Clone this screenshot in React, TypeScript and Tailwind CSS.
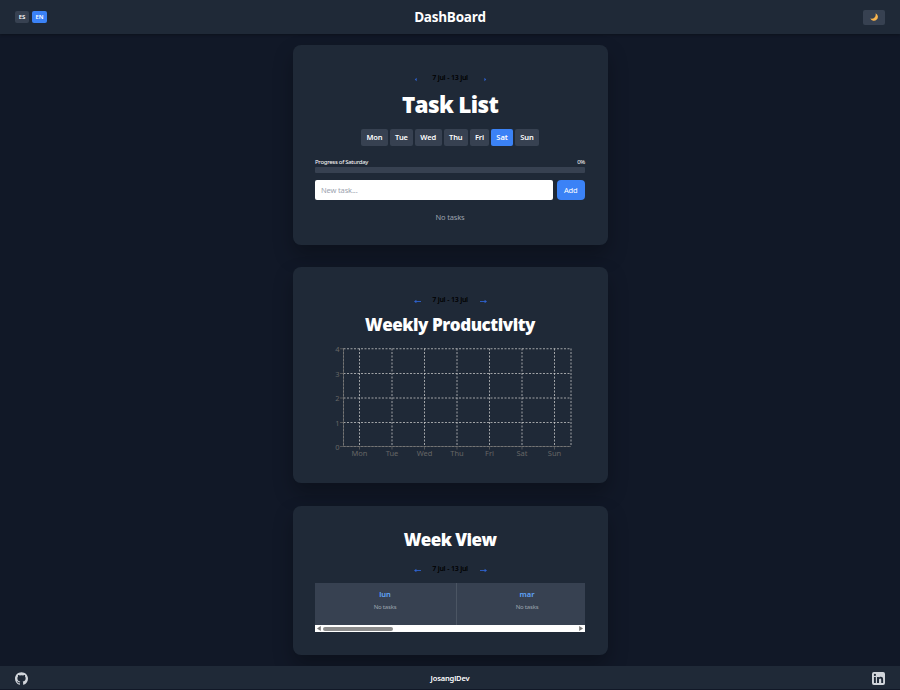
import React from "react";

const days = [
  { name: "Mon", width: "w-[27px]" },
  { name: "Tue", width: "w-[23px]" },
  { name: "Wed", width: "w-[26.5px]" },
  { name: "Thu", width: "w-[24.5px]" },
  { name: "Fri", width: "w-[19px]" },
  { name: "Sat", width: "w-[22px]" },
  { name: "Sun", width: "w-[24px]" },
];

function Arrow({ left = false, tip = false }: { left?: boolean; tip?: boolean }) {
  return (
    <svg className={left ? "h-[5px] w-[7px]" : "h-[5px] w-[7px] rotate-180"} viewBox="0 0 7 5">
      {!tip && <path d="M1 2.5H7" stroke="#2c5bbd" strokeWidth="1" />}
      <path d={tip ? "M0.8 2.5L2.6 0.8V4.2Z" : "M0 2.5L2.4 0.8V4.2Z"} fill="#2f62cf" />
    </svg>
  );
}

function WeekNav({ tip = false }: { tip?: boolean }) {
  return (
    <div className="flex h-3 items-center justify-center text-[7px] font-semibold text-black">
      <span className="pt-[2px]"><Arrow left tip={tip} /></span>
      <span className="w-[59px] whitespace-nowrap pt-px text-center tracking-[-0.28px] [word-spacing:0.3px]">7 jul - 13 jul</span>
      <span className="pt-[2px]"><Arrow tip={tip} /></span>
    </div>
  );
}

function Card({ className, children }: { className: string; children: React.ReactNode }) {
  return (
    <section className={"w-[315px] shrink-0 rounded-[8px] bg-[#1f2937] px-[22.5px] shadow-[0_10px_20px_rgba(0,0,0,0.28)] " + className}>
      {children}
    </section>
  );
}

function Chart() {
  const xs = [359.5, 392, 424.5, 457, 489.5, 522, 554.5];
  const ys = [348.75, 373.5, 398, 422.5, 446.5];
  return (
    <svg className="block h-[120px] w-[270px]" viewBox="315 343 270 120">
      <g stroke="#cccccc" strokeWidth="0.75" strokeDasharray="2 1.5" fill="none">
        {ys.map((y) => <path key={y} d={`M343.5 ${y}H571`} />)}
        {[343.5, ...xs, 571].map((x) => <path key={x} d={`M${x} 348.5V446.5`} />)}
      </g>
      <g stroke="#666666" strokeWidth="0.75">
        <path d="M343.5 348.5V446.5H571" fill="none" />
        {ys.map((y) => <path key={y} d={`M340 ${y}H343.5`} />)}
        {xs.map((x) => <path key={x} d={`M${x} 446.5V449.5`} />)}
      </g>
      <g fill="#666666" fontSize="7.5">
        {ys.map((y, i) => <text key={y} x="339.5" y={y + 3} textAnchor="end">{4 - i}</text>)}
        {xs.map((x, i) => <text key={x} x={x} y="455.5" textAnchor="middle">{days[i].name}</text>)}
      </g>
    </svg>
  );
}

export default function App() {
  return (
    <div className="flex h-[690px] w-[900px] flex-col overflow-hidden bg-[#111827] font-['Noto_Sans','Open_Sans',sans-serif] text-white">
      <header className="z-10 flex h-[34px] shrink-0 items-center justify-between bg-[#1f2937] px-[15px] shadow-[0_1px_3px_rgba(0,0,0,0.3)]">
        <div className="flex w-20 gap-[3px] text-[6px] font-semibold leading-none">
          <button className="h-[12px] w-[14px] rounded-[2px] bg-[#374151]">ES</button>
          <button className="h-[12px] w-[15px] rounded-[2px] bg-[#3b82f6]">EN</button>
        </div>
        <h1 className="pt-[2px] font-['Open_Sans',sans-serif] text-[13.5px] font-bold leading-none tracking-[-0.25px]">DashBoard</h1>
        <div className="flex w-20 justify-end">
          <button className="flex h-[15px] w-[22px] items-center justify-center rounded-[2px] bg-[#374151]">
            <svg className="h-2 w-2" viewBox="0 0 8 8"><path d="M5.6.2A4 4 0 1 1 .3 5.6C4 6.4 6.3 4 5.6.2Z" fill="#f9b44c" /></svg>
          </button>
        </div>
      </header>

      <main className="flex h-[631.5px] shrink-0 flex-col items-center pt-[11px]">
        <Card className="h-[200px] pt-[27px]">
          <WeekNav tip />
          <h2 className="mt-[7px] flex h-[27px] items-center justify-center whitespace-nowrap font-['Open_Sans',sans-serif] text-[22.5px] font-extrabold tracking-[-0.65px]">Task List</h2>
          <div className="mt-[11px] flex justify-center gap-[2px] text-[7.5px] font-semibold tracking-[-0.1px]">
            {days.map((d) => (
              <button key={d.name} className={"h-[17px] rounded-[2px] pt-px " + d.width + (d.name === "Sat" ? " bg-[#3b82f6]" : " bg-[#374151]")}>{d.name}</button>
            ))}
          </div>
          <div className="mt-[11px] flex h-[10px] items-center justify-between text-[6px] tracking-[-0.28px]">
            <span>Progress of Saturday</span><span>0%</span>
          </div>
          <div className="h-[5.5px] rounded-[1px] bg-[#374151]" />
          <div className="mt-[7.5px] flex h-5 gap-[3.5px] text-[7.5px] tracking-[-0.15px]">
            <input className="w-[238px] rounded-[2px] bg-white px-[6px] pt-px text-black placeholder:text-[#9ca3af]" placeholder="New task..." />
            <button className="flex-1 rounded-[4px] bg-[#3b82f6] pt-px">Add</button>
          </div>
          <p className="mt-[11px] text-center text-[7.5px] leading-[12px] tracking-[-0.15px] text-[#9ca3af]">No tasks</p>
        </Card>

        <Card className="mt-[22px] h-[216px] pt-[27px]">
          <WeekNav />
          <h2 className="mt-[6px] flex h-[25px] items-center justify-center whitespace-nowrap font-['Open_Sans',sans-serif] text-[17px] font-extrabold tracking-[-0.45px]">Weekly Productivity</h2>
          <div className="mt-[6px]"><Chart /></div>
        </Card>

        <Card className="mt-[23px] h-[148.5px] pt-[21px]">
          <h2 className="flex h-[25px] items-center justify-center whitespace-nowrap font-['Open_Sans',sans-serif] text-[17px] font-extrabold tracking-[-0.55px]">Week View</h2>
          <div className="mt-[11px]"><WeekNav /></div>
          <div className="mt-[8px] grid h-[42px] grid-cols-[142px_1fr] text-center">
            {["lun", "mar"].map((d) => (
              <div key={d} className={d === "lun" ? "border-r border-[#4b5563] bg-[#374151] pt-[6px]" : "w-[128px] overflow-hidden bg-[#374151] pt-[6px]"}>
                <div className="w-[140px]">
                  <h3 className="text-[7.5px] font-semibold leading-[11px] text-[#60a5fa]">{d}</h3>
                  <p className="mt-[2px] text-[6px] leading-[11px] tracking-[-0.2px] text-[#9ca3af]">No tasks</p>
                </div>
              </div>
            ))}
          </div>
          <div className="flex h-[7px] items-center justify-between bg-white px-[2px]">
            <svg className="h-[5px] w-1" viewBox="0 0 4 5"><path d="M0 2.5L3.8 0V5Z" fill="#777777" /></svg>
            <div className="ml-[2px] h-1 w-[70px] rounded-full bg-[#8b8b8b]" />
            <svg className="ml-auto h-[5px] w-1" viewBox="0 0 4 5"><path d="M4 2.5L.2 0V5Z" fill="#777777" /></svg>
          </div>
        </Card>
      </main>

      <footer className="z-10 flex h-[24.5px] shrink-0 items-center justify-between border-b border-[#111827] bg-[#1f2937] px-[15px]">
        <svg className="mt-[2px] h-[13px] w-[13px]" viewBox="0 0 24 24" fill="#d1d5db"><path d="M12 .5C5.37.5 0 5.78 0 12.292c0 5.211 3.438 9.63 8.205 11.188.6.111.82-.254.82-.567v-2.18c-3.338.711-4.042-1.41-4.042-1.41-.546-1.359-1.333-1.721-1.333-1.721-1.09-.73.083-.716.083-.716 1.205.083 1.84 1.215 1.84 1.215 1.071 1.802 2.81 1.281 3.495.98.108-.764.42-1.282.763-1.577-2.665-.297-5.467-1.309-5.467-5.827 0-1.287.467-2.339 1.235-3.164-.124-.297-.535-1.496.117-3.12 0 0 1.008-.317 3.3 1.209a11.7 11.7 0 0 1 6.006 0c2.29-1.526 3.297-1.209 3.297-1.209.653 1.624.242 2.823.12 3.12.77.825 1.233 1.877 1.233 3.164 0 4.53-2.807 5.527-5.48 5.817.43.366.814 1.087.814 2.19v3.248c0 .315.216.683.825.566C20.565 21.917 24 17.501 24 12.292 24 5.78 18.627.5 12 .5Z" /></svg>
        <span className="pt-[2px] text-[7.5px] font-semibold tracking-[-0.15px]">JosanglDev</span>
        <svg className="mt-[2px] h-[13px] w-[13px]" viewBox="0 0 24 24"><rect width="24" height="24" rx="3.5" fill="#d1d5db" /><path fill="#1f2937" d="M3.6 9h3.5v11.4H3.6ZM5.35 3.3a2.05 2.05 0 1 1 0 4.1 2.05 2.05 0 0 1 0-4.1ZM9.3 9h3.4v1.6c.6-1 1.8-1.9 3.5-1.9 3.6 0 4.3 2.4 4.3 5.5v6.2H17v-5.5c0-1.4 0-3-1.9-3s-2.2 1.4-2.2 2.9v5.6H9.3Z" /></svg>
      </footer>
    </div>
  );
}
